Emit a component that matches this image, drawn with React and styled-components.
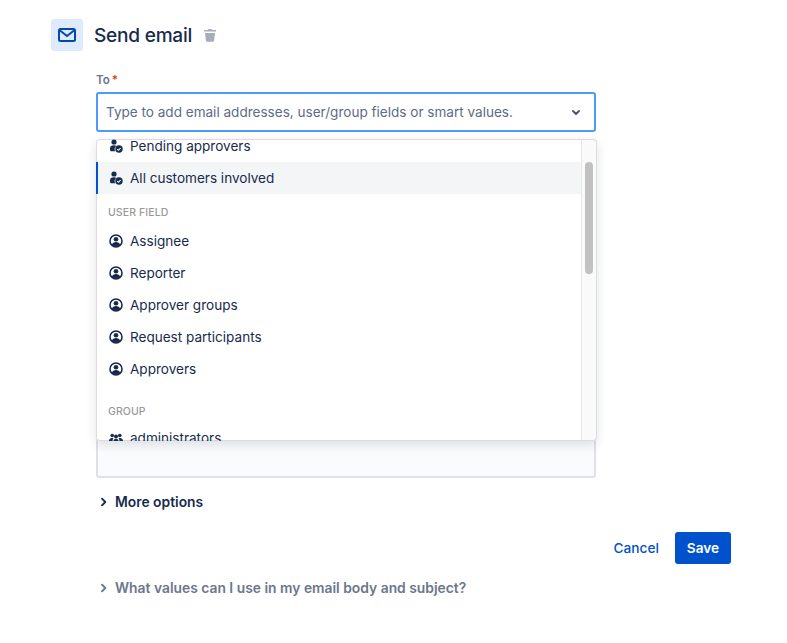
import React from "react";
import styled, { createGlobalStyle } from "styled-components";

const GlobalStyle = createGlobalStyle`
  html, body {
    margin: 0;
    background: #fff;
    font-family: Inter, "Liberation Sans", sans-serif;
    color: #172b4d;
  }
`;

const Page = styled.div`
  width: 787px;
  height: 643px;
  overflow: hidden;
  box-sizing: border-box;
  padding: 19px 0 0 51px;
`;

const Header = styled.div`
  display: flex;
  align-items: center;
  height: 32px;
`;

const IconTile = styled.div`
  width: 32px;
  height: 32px;
  border-radius: 3px;
  background: #deebff;
  display: flex;
  align-items: center;
  justify-content: center;
`;

const Title = styled.h2`
  margin: 0 0 0 11px;
  font-size: 19.1px;
  font-weight: 500;
  letter-spacing: -0.25px;
  line-height: 32px;
  color: #172b4d;
`;

const TrashButton = styled.button`
  margin-left: 11px;
  padding: 0;
  border: 0;
  background: none;
  display: flex;
`;

const Form = styled.div`
  width: 500px;
  margin-left: 45px;
`;

const Label = styled.label`
  display: block;
  margin-top: 21px;
  height: 20px;
  font-size: 11.6px;
  font-weight: 600;
  line-height: 16px;
  color: #6b778c;
`;

const Required = styled.span`
  color: #de350b;
  margin-left: 2px;
`;

const SelectWrap = styled.div`
  position: relative;
`;

const SelectControl = styled.div`
  height: 40px;
  box-sizing: border-box;
  border: 2px solid #4c9aff;
  border-radius: 3px;
  background: #fff;
  display: flex;
  align-items: center;
  justify-content: space-between;
  padding: 0 12px 0 8px;
`;

const Placeholder = styled.span`
  font-size: 13.56px;
  line-height: 16px;
  color: #5e6c84;
`;

const Menu = styled.div`
  position: absolute;
  z-index: 2;
  top: 47px;
  left: 0;
  width: 501px;
  height: 302px;
  display: flex;
  background: #fff;
  border-radius: 4px;
  box-shadow: inset 0 0 0 1px #dcdcdc, 0 4px 11px rgba(9, 30, 66, 0.12);
  overflow: hidden;
`;

const OptionList = styled.div`
  flex: 1;
  min-width: 0;
  margin-top: -9px;
`;

const Option = styled.div`
  height: 32px;
  box-sizing: border-box;
  display: flex;
  align-items: center;
  gap: 7px;
  padding: 0 0 1px 11px;
  font-size: 13.56px;
  color: #172b4d;
  background: ${(p) => (p.$active ? "#f4f5f7" : "transparent")};
  border-left: 2px solid ${(p) => (p.$active ? "#0052cc" : "transparent")};
`;

const GroupHeading = styled.div`
  height: 11px;
  padding-left: 12px;
  font-size: 10.5px;
  font-weight: 500;
  line-height: 11px;
  color: #999;
  letter-spacing: 0.1px;
  margin: ${(p) => p.$margin};
`;

const ScrollTrack = styled.div`
  width: 16px;
  flex: none;
  box-sizing: border-box;
  background: #fafafa;
  border: 1px solid #dcdcdc;
  border-left-color: #e8e8e8;
  border-radius: 0 4px 4px 0;
  padding: 22px 3px 0 3px;
`;

const ScrollThumb = styled.div`
  height: 112px;
  border-radius: 4px;
  background: #c1c1c1;
`;

const BodyField = styled.div`
  margin-top: 252px;
  height: 94px;
  box-sizing: border-box;
  background: #fafbfc;
  border: 2px solid #dfe1e6;
  border-radius: 3px;
`;

const Disclosure = styled.button`
  display: flex;
  align-items: center;
  gap: 6px;
  padding: 0;
  border: 0;
  background: none;
  font-family: inherit;
  font-size: 13.85px;
  font-weight: 600;
  line-height: 20px;
  color: ${(p) => p.$color};
  margin: ${(p) => p.$margin};
`;

const Actions = styled.div`
  display: flex;
  justify-content: flex-end;
  align-items: center;
  margin: 20px -135px 0 0;
`;

const CancelButton = styled.button`
  height: 32px;
  padding: 0 16px;
  border: 0;
  background: none;
  font-family: inherit;
  font-size: 13.7px;
  font-weight: 500;
  color: #0052cc;
`;

const SaveButton = styled.button`
  width: 56px;
  height: 32px;
  padding: 0;
  border: 0;
  border-radius: 3px;
  background: #0052cc;
  color: #fff;
  font-family: inherit;
  font-size: 13.7px;
  font-weight: 600;
`;

const MailIcon = () => (
  <svg width="20" height="20" viewBox="0 0 20 20" fill="none">
    <rect x="2" y="4" width="16" height="12" rx="1.5" stroke="#0747a6" strokeWidth="2" />
    <path d="M3 5.500l7 5.500 7-5.500" stroke="#0747a6" strokeWidth="2" />
  </svg>
);

const TrashIcon = () => (
  <svg width="14" height="14" viewBox="0 0 14 14" fill="#a5adba">
    <path d="M5.400 1h3.200l.5 1H12.500c.4 0 .5.3.5.6v.9H1v-.9c0-.3.1-.6.5-.6h3.400z" />
    <path d="M2 5h10l-.9 7.600c-.1.8-.5 1.200-1.200 1.200H4.100c-.7 0-1.100-.4-1.200-1.200z" />
  </svg>
);

const ChevronDown = () => (
  <svg width="12" height="12" viewBox="0 0 12 12" fill="none">
    <path d="M3 5l3 3 3-3" stroke="#42526e" strokeWidth="1.800" strokeLinecap="round" strokeLinejoin="round" />
  </svg>
);

const ChevronRight = ({ color }) => (
  <svg width="10" height="10" viewBox="0 0 10 10" fill="none">
    <path d="M3 1.700L6.300 5 3 8.300" stroke={color} strokeWidth="1.900" strokeLinecap="round" strokeLinejoin="round" />
  </svg>
);

const PersonCheckIcon = () => (
  <svg width="14" height="14" viewBox="0 0 14 14" style={{ flex: "none" }}>
    <circle cx="5" cy="3" r="2.600" fill="#172b4d" />
    <path d="M1 9.500C1 7.500 2.500 6.300 5 6.300c1 0 1.800.2 2.500.5C6.300 7.500 5.600 8.800 5.600 10c0 .9.300 1.700.8 2.300H2.500C1.500 12.300 1 11.500 1 10.500z" fill="#172b4d" />
    <circle cx="10" cy="10" r="3.700" fill="#172b4d" />
    <path d="M8.300 10.100l1.200 1.200 2.100-2.300" fill="none" stroke="#fff" strokeWidth="1.100" />
  </svg>
);

const PersonCircleIcon = () => (
  <svg width="14" height="14" viewBox="0 0 14 14" style={{ flex: "none" }}>
    <circle cx="7" cy="7" r="6" fill="#fff" stroke="#172b4d" strokeWidth="1.600" />
    <circle cx="7" cy="5.300" r="2.300" fill="#172b4d" />
    <path d="M2.800 11c.6-2 2.200-2.900 4.200-2.900s3.600.9 4.200 2.900C10.200 12.300 8.700 13 7 13s-3.200-.7-4.200-2z" fill="#172b4d" />
  </svg>
);

const GroupIcon = () => (
  <svg width="14" height="14" viewBox="0 0 14 14" fill="#172b4d" style={{ flex: "none" }}>
    <circle cx="3.200" cy="4.500" r="1.800" />
    <circle cx="10.800" cy="4.500" r="1.800" />
    <circle cx="7" cy="5.500" r="2" />
    <path d="M0 10c0-2 1.300-3 3.200-3 .6 0 1 .1 1.300.3C3.800 8 3.500 9 3.500 10z" />
    <path d="M14 10c0-2-1.300-3-3.200-3-.6 0-1 .1-1.300.3.700.7 1 1.700 1 2.700z" />
    <path d="M4.300 11c0-2 1-3.300 2.700-3.300S9.700 9 9.700 11z" />
  </svg>
);

const userFields = ["Assignee", "Reporter", "Approver groups", "Request participants", "Approvers"];

export default function App() {
  return (
    <Page>
      <GlobalStyle />
      <Header>
        <IconTile>
          <MailIcon />
        </IconTile>
        <Title>Send email</Title>
        <TrashButton>
          <TrashIcon />
        </TrashButton>
      </Header>
      <Form>
        <Label>
          To<Required>*</Required>
        </Label>
        <SelectWrap>
          <SelectControl>
            <Placeholder>Type to add email addresses, user/group fields or smart values.</Placeholder>
            <ChevronDown />
          </SelectControl>
          <Menu>
            <OptionList>
              <Option>
                <PersonCheckIcon />
                Pending approvers
              </Option>
              <Option $active>
                <PersonCheckIcon />
                All customers involved
              </Option>
              <GroupHeading $margin="13px 0 7px">USER FIELD</GroupHeading>
              {userFields.map((name) => (
                <Option key={name}>
                  <PersonCircleIcon />
                  {name}
                </Option>
              ))}
              <GroupHeading $margin="21px 0 5px">GROUP</GroupHeading>
              <Option>
                <GroupIcon />
                administrators
              </Option>
            </OptionList>
            <ScrollTrack>
              <ScrollThumb />
            </ScrollTrack>
          </Menu>
        </SelectWrap>
        <BodyField />
        <Disclosure $color="#172b4d" $margin="14px 0 0 3px">
          <ChevronRight color="#172b4d" />
          More options
        </Disclosure>
        <Actions>
          <CancelButton>Cancel</CancelButton>
          <SaveButton>Save</SaveButton>
        </Actions>
        <Disclosure $color="#6b778c" $margin="14px 0 0 3px">
          <ChevronRight color="#6b778c" />
          What values can I use in my email body and subject?
        </Disclosure>
      </Form>
    </Page>
  );
}
